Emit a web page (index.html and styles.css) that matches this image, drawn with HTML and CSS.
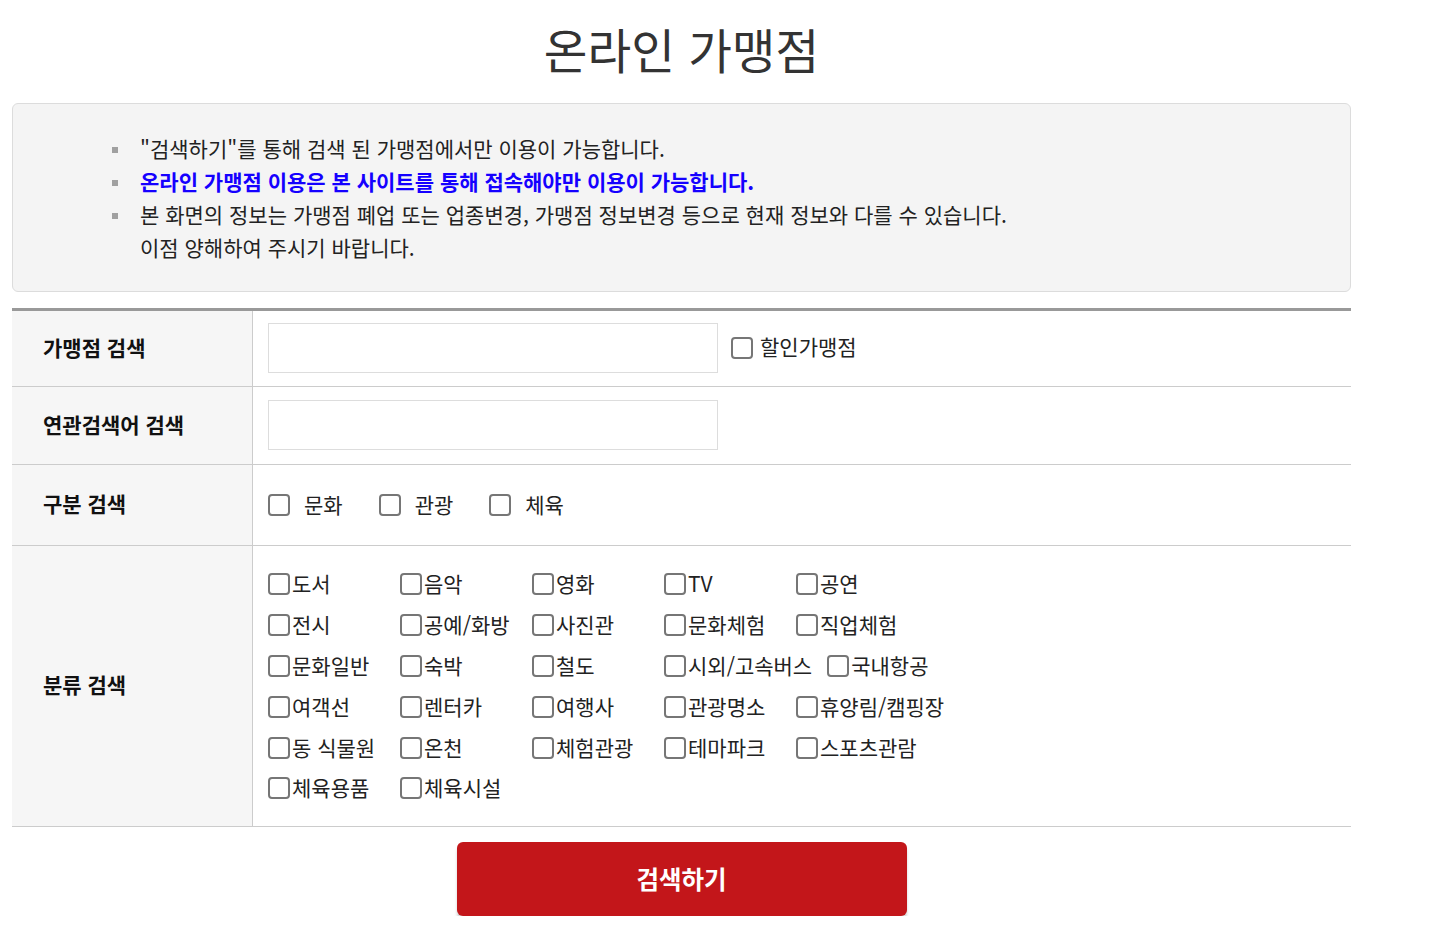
FILE: index.html
```html
<!DOCTYPE html>
<html lang="ko">
<head>
<meta charset="utf-8">
<title>온라인 가맹점</title>
<link rel="stylesheet" href="styles.css">
</head>
<body>
<div class="wrap">
  <h1 class="title">온라인 가맹점</h1>
  <div class="notice">
    <ul>
      <li>"검색하기"를 통해 검색 된 가맹점에서만 이용이 가능합니다.</li>
      <li class="strong">온라인 가맹점 이용은 본 사이트를 통해 접속해야만 이용이 가능합니다.</li>
      <li>본 화면의 정보는 가맹점 폐업 또는 업종변경, 가맹점 정보변경 등으로 현재 정보와 다를 수 있습니다.<br>이점 양해하여 주시기 바랍니다.</li>
    </ul>
  </div>
  <div class="form">
    <div class="lbl">가맹점 검색</div>
    <div class="val">
      <input type="text" class="txt">
      <label class="chk-sale"><input type="checkbox"><span>할인가맹점</span></label>
    </div>
    <div class="lbl">연관검색어 검색</div>
    <div class="val val-second">
      <input type="text" class="txt">
    </div>
    <div class="lbl">구분 검색</div>
    <div class="val kind">
      <label class="kind-item"><input type="checkbox"><span>문화</span></label>
      <label class="kind-item"><input type="checkbox"><span>관광</span></label>
      <label class="kind-item"><input type="checkbox"><span>체육</span></label>
    </div>
    <div class="lbl">분류 검색</div>
    <div class="val cats">
      <div class="cat-row">
        <label class="cat"><input type="checkbox"><span>도서</span></label>
        <label class="cat"><input type="checkbox"><span>음악</span></label>
        <label class="cat"><input type="checkbox"><span>영화</span></label>
        <label class="cat"><input type="checkbox"><span>TV</span></label>
        <label class="cat"><input type="checkbox"><span>공연</span></label>
      </div>
      <div class="cat-row">
        <label class="cat"><input type="checkbox"><span>전시</span></label>
        <label class="cat"><input type="checkbox"><span>공예/화방</span></label>
        <label class="cat"><input type="checkbox"><span>사진관</span></label>
        <label class="cat"><input type="checkbox"><span>문화체험</span></label>
        <label class="cat"><input type="checkbox"><span>직업체험</span></label>
      </div>
      <div class="cat-row">
        <label class="cat"><input type="checkbox"><span>문화일반</span></label>
        <label class="cat"><input type="checkbox"><span>숙박</span></label>
        <label class="cat"><input type="checkbox"><span>철도</span></label>
        <label class="cat"><input type="checkbox"><span>시외/고속버스</span></label>
        <label class="cat"><input type="checkbox"><span>국내항공</span></label>
      </div>
      <div class="cat-row">
        <label class="cat"><input type="checkbox"><span>여객선</span></label>
        <label class="cat"><input type="checkbox"><span>렌터카</span></label>
        <label class="cat"><input type="checkbox"><span>여행사</span></label>
        <label class="cat"><input type="checkbox"><span>관광명소</span></label>
        <label class="cat"><input type="checkbox"><span>휴양림/캠핑장</span></label>
      </div>
      <div class="cat-row">
        <label class="cat"><input type="checkbox"><span>동 식물원</span></label>
        <label class="cat"><input type="checkbox"><span>온천</span></label>
        <label class="cat"><input type="checkbox"><span>체험관광</span></label>
        <label class="cat"><input type="checkbox"><span>테마파크</span></label>
        <label class="cat"><input type="checkbox"><span>스포츠관람</span></label>
      </div>
      <div class="cat-row">
        <label class="cat"><input type="checkbox"><span>체육용품</span></label>
        <label class="cat"><input type="checkbox"><span>체육시설</span></label>
      </div>
    </div>
  </div>
  <div class="actions">
    <button type="button" class="btn-search">검색하기</button>
  </div>
</div>
</body>
</html>
```

FILE: styles.css
```css
* { box-sizing: border-box; }
html, body { margin: 0; padding: 0; background: #fff; }
body {
  font-family: "Malgun Gothic", "Noto Sans CJK KR", "Noto Sans", sans-serif;
  color: #222;
}
.wrap {
  width: 1339px;
  margin-left: 12px;
}
.title {
  margin: 0 0 24px;
  padding-top: 19px;
  line-height: 60px;
  font-size: 47.5px;
  font-weight: 400;
  text-align: center;
  color: #333;
}
.notice {
  background: #f4f4f4;
  border: 1px solid #dcdcdc;
  border-radius: 6px;
  padding: 28px 0 27px;
}
.notice ul {
  margin: 0;
  padding: 0 0 0 127px;
  list-style: none;
}
.notice li {
  position: relative;
  font-size: 21px;
  line-height: 33px;
  color: #222;
}
.notice li::before {
  content: "";
  position: absolute;
  left: -28px;
  top: 15px;
  width: 6px;
  height: 6px;
  background: #a0a0a0;
}
.notice li.strong {
  color: #1500ff;
  font-weight: 700;
}
.form {
  margin-top: 16px;
  border-top: 3px solid #999;
  display: grid;
  grid-template-columns: 241px 1fr;
}
.lbl {
  background: #f6f6f6;
  border-right: 1px solid #ccc;
  border-bottom: 1px solid #ccc;
  display: flex;
  align-items: center;
  padding-left: 31px;
  padding-bottom: 4px;
  font-size: 21px;
  font-weight: 700;
  color: #111;
}
.val {
  border-bottom: 1px solid #ccc;
  padding: 12px 15px 13px;
  display: flex;
  align-items: center;
  font-size: 21px;
  color: #222;
}
.val-second {
  padding: 13px 15px 14px;
}
.txt {
  width: 450px;
  height: 50px;
  border: 1px solid #ddd;
  background: #fff;
  margin: 0;
  padding: 0 10px;
  font-size: 18px;
}
input[type="checkbox"] {
  -webkit-appearance: none;
  appearance: none;
  width: 22px;
  height: 22px;
  margin: 0;
  flex: none;
  border: 2px solid #767676;
  border-radius: 4px;
  background: #fff;
}
.chk-sale {
  display: inline-flex;
  align-items: center;
  margin-left: 13px;
  gap: 7px;
}
.chk-sale span { position: relative; top: -2px; }
.kind {
  padding: 25px 15px 25px;
  line-height: 30px;
}
.kind-item {
  display: inline-flex;
  align-items: center;
  gap: 14px;
  margin-right: 36px;
}
.kind-item span { position: relative; top: -1px; }
.cats {
  display: block;
  padding: 18px 15px 17px;
}
.cat-row {
  display: flex;
  height: 40.8px;
  align-items: center;
}
.cat {
  display: inline-flex;
  align-items: center;
  min-width: 117px;
  margin-right: 15px;
  gap: 2px;
  white-space: nowrap;
}
.cat span { position: relative; top: -1px; }
.actions {
  display: flex;
  justify-content: center;
  padding-top: 15px;
}
.btn-search {
  width: 450px;
  height: 74px;
  border: 0;
  border-radius: 6px;
  background: #c3161a;
  color: #fff;
  font-family: inherit;
  font-size: 24.5px;
  font-weight: 700;
  box-shadow: 0 4px 3px rgba(0, 0, 0, 0.18);
  cursor: pointer;
}
```
